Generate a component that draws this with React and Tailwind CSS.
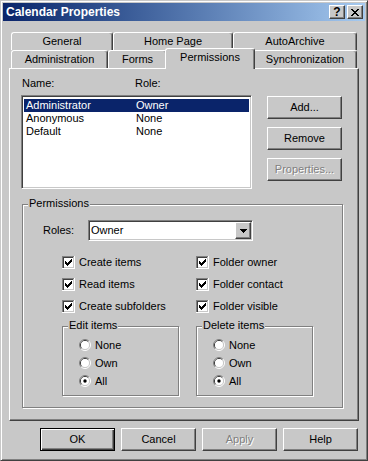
import React from "react";

const raised =
  "border border-t-white border-l-white border-r-[#404040] border-b-[#404040] shadow-[inset_-1px_-1px_0_#808080]";
const sunken =
  "border border-t-[#808080] border-l-[#808080] border-r-white border-b-white shadow-[inset_1px_1px_0_#404040,inset_-1px_-1px_0_#c8c8c8]";
const etched = "border border-[#808080] shadow-[inset_1px_1px_0_#fff,1px_1px_0_#fff]";

const members = [
  { name: "Administrator", role: "Owner", selected: true },
  { name: "Anonymous", role: "None" },
  { name: "Default", role: "None" },
];

const TitleButton = ({ children, className = "" }) => (
  <div
    className={`flex h-[14px] w-[16px] items-center justify-center bg-[#c8c8c8] ${raised} ${className}`}
  >
    {children}
  </div>
);

const Tab = ({ children, className = "" }) => (
  <div
    className={`flex h-[18px] shrink-0 items-center justify-center rounded-t-[3px] border-l border-t border-r border-l-white border-t-white border-r-[#404040] bg-[#c8c8c8] shadow-[inset_-1px_0_0_#808080] ${className}`}
  >
    {children}
  </div>
);

const Button = ({ children, disabled, isDefault, className = "" }) => (
  <div
    className={`flex h-[23px] w-[75px] items-center justify-center ${
      isDefault
        ? "border border-black shadow-[inset_1px_1px_0_#fff,inset_-1px_-1px_0_#404040,inset_-2px_-2px_0_#808080]"
        : raised
    } ${disabled ? "text-[#808080] [text-shadow:1px_1px_0_#fff]" : "text-black"} ${className}`}
  >
    {children}
  </div>
);

const Checkbox = ({ label }) => (
  <div className="flex items-center gap-[4px]">
    <svg width="13" height="13" viewBox="0 0 13 13" shapeRendering="crispEdges">
      <rect width="13" height="13" fill="#fff" />
      <path d="M0 0h12v1H1v11H0z" fill="#808080" />
      <rect x="1" y="1" width="11" height="11" fill="#c8c8c8" />
      <path d="M1 1h10v1H2v10H1z" fill="#404040" />
      <rect x="2" y="2" width="9" height="9" fill="#fff" />
      <path
        d="M9 3h1v1H9zM8 4h2v1H8zM3 5h1v1H3zM7 5h3v1H7zM3 6h2v1H3zM6 6h3v1H6zM3 7h5v1H3zM4 8h3v1H4zM5 9h1v1H5z"
        fill="#000"
      />
    </svg>
    <span>{label}</span>
  </div>
);

const Radio = ({ label, checked }) => (
  <div className="flex h-[18px] items-center gap-[4px]">
    <svg width="12" height="12" viewBox="0 0 12 12">
      <path d="M2.11 9.89A5.5 5.5 0 0 1 9.89 2.11" fill="none" stroke="#808080" />
      <path d="M9.89 2.11A5.5 5.5 0 0 1 2.11 9.89" fill="none" stroke="#fff" />
      <path d="M2.82 9.18A4.5 4.5 0 0 1 9.18 2.82" fill="none" stroke="#404040" />
      <path d="M9.18 2.82A4.5 4.5 0 0 1 2.82 9.18" fill="none" stroke="#c8c8c8" />
      <circle cx="6" cy="6" r="4" fill="#fff" />
      {checked && <circle cx="6" cy="6" r="1.7" fill="#000" />}
    </svg>
    <span>{label}</span>
  </div>
);

const RadioGroup = ({ title }) => (
  <div className={`relative h-[70px] w-[117px] pl-[16px] pt-[9px] ${etched}`}>
    <span className="absolute -top-[8px] left-[5px] bg-[#c8c8c8] px-[1px]">{title}</span>
    <Radio label="None" />
    <Radio label="Own" />
    <Radio label="All" checked />
  </div>
);

export default function App() {
  return (
    <div className="h-[461px] w-[368px] select-none border border-t-[#c8c8c8] border-l-[#c8c8c8] border-r-[#404040] border-b-[#404040] bg-[#c8c8c8] p-[2px] font-['Liberation_Sans',Arial,sans-serif] text-[11px] leading-[13px] text-black shadow-[inset_1px_1px_0_#fff,inset_-1px_-1px_0_#808080]">
      {/* Title bar */}
      <div className="flex h-[18px] items-center gap-[2px] bg-linear-to-r from-[#0a246a] to-[#a6caf0] pl-[3px] pr-[2px]">
        <span className="flex-1 text-[12px] font-bold text-white">Calendar Properties</span>
        <TitleButton>
          <span className="text-[12px] font-bold leading-none">?</span>
        </TitleButton>
        <TitleButton>
          <svg width="8" height="7" viewBox="0 0 8 7" shapeRendering="crispEdges">
            <path
              d="M0 0h2v1H0zM6 0h2v1H6zM1 1h2v1H1zM5 1h2v1H5zM2 2h4v1H2zM3 3h2v1H3zM2 4h4v1H2zM1 5h2v1H1zM5 5h2v1H5zM0 6h2v1H0zM6 6h2v1H6z"
              fill="#000"
            />
          </svg>
        </TitleButton>
      </div>

      {/* Tabs */}
      <div className="ml-[6px] mt-[11px] w-[350px]">
        <div className="flex h-[18px] pl-[2px]">
          <Tab className="w-[102px]">General</Tab>
          <Tab className="w-[120px]">Home Page</Tab>
          <Tab className="w-[124px]">AutoArchive</Tab>
        </div>
        <div className="flex h-[18px] items-end pl-[2px]">
          <Tab className="w-[97px]">Administration</Tab>
          <Tab className="w-[59px]">Forms</Tab>
          <Tab className="relative z-10 -mx-[2px] -mb-[1px] h-[21px] w-[90px] pb-[4px]">
            Permissions
          </Tab>
          <Tab className="w-[104px]">Synchronization</Tab>
        </div>

        {/* Panel */}
        <div className="h-[353px] border border-t-white border-l-white border-r-[#404040] border-b-[#404040] pl-[11px] pt-[8px] shadow-[inset_-1px_-1px_0_#808080]">
          <div className="flex">
            <div className="w-[231px]">
              <div className="flex h-[13px] pl-[1px]">
                <span className="w-[113px]">Name:</span>
                <span>Role:</span>
              </div>
              <div className={`mt-[5px] h-[94px] bg-white p-[2px] pt-[3px] ${sunken}`}>
                {members.map((m) => (
                  <div
                    key={m.name}
                    className={`flex h-[13px] pl-[2px] ${
                      m.selected ? "bg-[#0a246a] text-white" : "text-black"
                    }`}
                  >
                    <span className="w-[110px]">{m.name}</span>
                    <span>{m.role}</span>
                  </div>
                ))}
              </div>
            </div>
            <div className="ml-[15px] mt-[19px] flex flex-col gap-[8px]">
              <Button>Add...</Button>
              <Button>Remove</Button>
              <Button disabled>Properties...</Button>
            </div>
          </div>

          {/* Permissions group */}
          <div className={`relative ml-[1px] mt-[15px] h-[204px] w-[321px] ${etched}`}>
            <span className="absolute -top-[8px] left-[5px] bg-[#c8c8c8] px-[1px]">Permissions</span>

            <div className="mt-[15px] flex items-center pl-[20px]">
              <span className="w-[45px]">Roles:</span>
              <div className={`flex h-[21px] w-[165px] bg-white p-[1px] ${sunken}`}>
                <span className="flex flex-1 items-center pl-[1px]">Owner</span>
                <div className={`flex w-[16px] items-center justify-center bg-[#c8c8c8] ${raised}`}>
                  <svg width="7" height="4" viewBox="0 0 7 4" shapeRendering="crispEdges">
                    <path d="M0 0h7v1H0zM1 1h5v1H1zM2 2h3v1H2zM3 3h1v1H3z" fill="#000" />
                  </svg>
                </div>
              </div>
            </div>

            <div className="mt-[11px] grid grid-cols-[134px_auto] pl-[39px]">
              <div className="flex h-[21px] items-center"><Checkbox label="Create items" /></div>
              <div className="flex h-[21px] items-center"><Checkbox label="Folder owner" /></div>
              <div className="flex h-[22px] items-center"><Checkbox label="Read items" /></div>
              <div className="flex h-[22px] items-center"><Checkbox label="Folder contact" /></div>
              <div className="flex h-[22px] items-center"><Checkbox label="Create subfolders" /></div>
              <div className="flex h-[22px] items-center"><Checkbox label="Folder visible" /></div>
            </div>

            <div className="mt-[9px] flex gap-[17px] pl-[39px]">
              <RadioGroup title="Edit items" />
              <RadioGroup title="Delete items" />
            </div>
          </div>
        </div>
      </div>

      {/* Dialog buttons */}
      <div className="mt-[7px] flex justify-end gap-[6px] pr-[7px]">
        <Button isDefault>OK</Button>
        <Button>Cancel</Button>
        <Button disabled>Apply</Button>
        <Button>Help</Button>
      </div>
    </div>
  );
}
